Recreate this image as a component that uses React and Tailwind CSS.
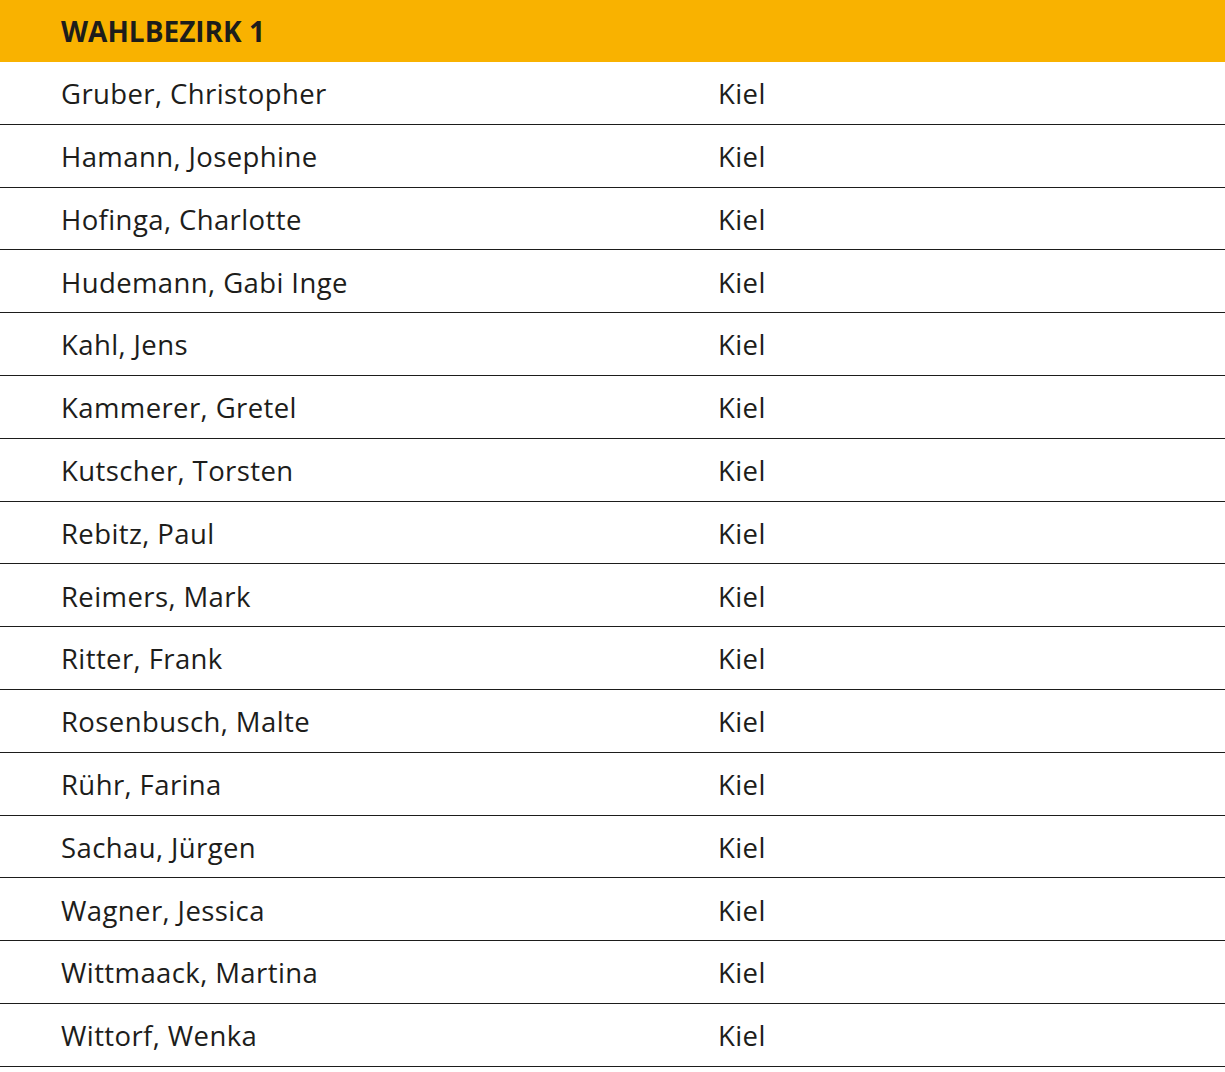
import React from 'react';

const members = [
  'Gruber, Christopher',
  'Hamann, Josephine',
  'Hofinga, Charlotte',
  'Hudemann, Gabi Inge',
  'Kahl, Jens',
  'Kammerer, Gretel',
  'Kutscher, Torsten',
  'Rebitz, Paul',
  'Reimers, Mark',
  'Ritter, Frank',
  'Rosenbusch, Malte',
  'Rühr, Farina',
  'Sachau, Jürgen',
  'Wagner, Jessica',
  'Wittmaack, Martina',
  'Wittorf, Wenka',
];

export default function App() {
  return (
    <div className="w-[1225px] bg-white text-[#1d1d1b] font-['Open_Sans',sans-serif]">
      {/* Header */}
      <div className="h-[62px] bg-[#f9b200] flex items-center pl-[61px]">
        <h1 className="text-[28px] font-bold leading-none">WAHLBEZIRK 1</h1>
      </div>

      {/* Rows */}
      {members.map((name) => (
        <div
          key={name}
          className="h-[62.8px] flex items-center pt-[2px] border-b-[1.6px] border-[#1d1d1b] text-[27.5px] tracking-[0.4px] leading-none"
        >
          <span className="w-[718px] pl-[61px]">{name}</span>
          <span>Kiel</span>
        </div>
      ))}
    </div>
  );
}
